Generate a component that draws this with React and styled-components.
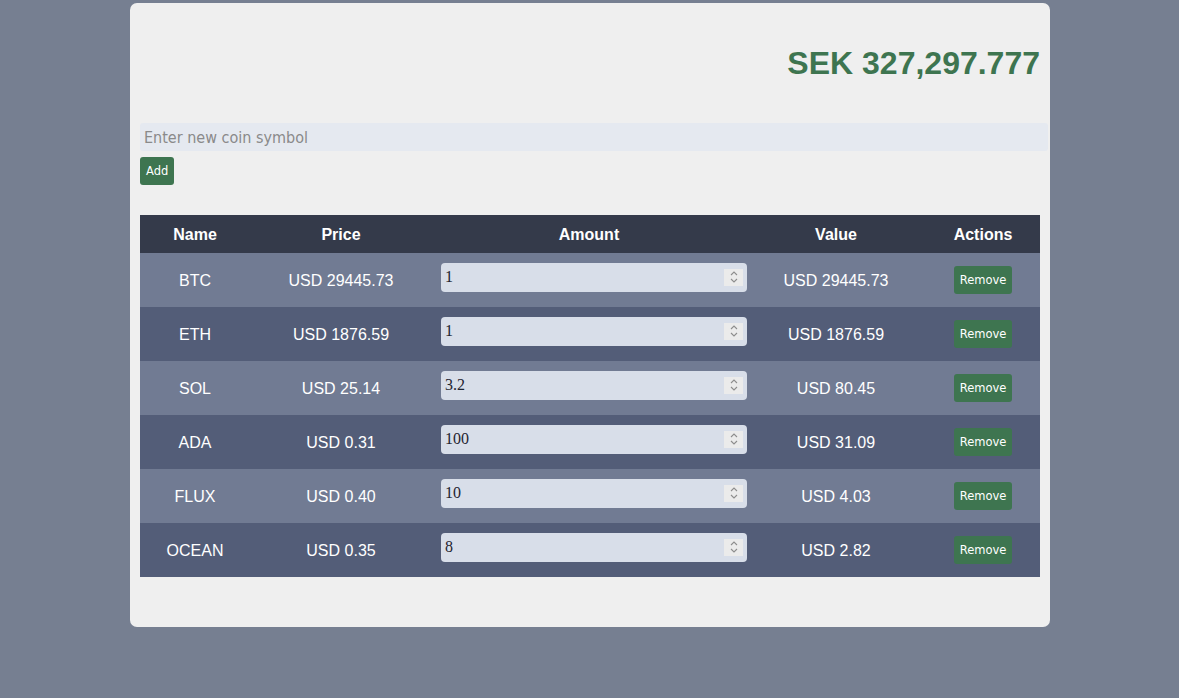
import React, { useState } from "react";
import styled, { createGlobalStyle } from "styled-components";

const GlobalStyle = createGlobalStyle`
    * { box-sizing: content-box; }
    body {
        margin: 0;
        background-color: #767f91;
        font-family: "Liberation Sans", Arial, sans-serif;
    }
`

const Page = styled.div`
    width: 100%;
    min-height: 698px;
    padding-top: 3px;
`

const Card = styled.div`
    width: 900px;
    margin-left: 130px;
    padding: 0 10px 50px 10px;
    background-color: #efefef;
    border-radius: 7px;
`

const Total = styled.h1`
    margin: 0;
    padding: 42px 0 0 0;
    height: 78px;
    text-align: right;
    font-size: 32px;
    font-weight: 700;
    color: #3e7550;
`

const CoinInput = styled.input`
    display: block;
    width: 100%;
    height: 28px;
    padding: 0 4px;
    border: none;
    outline: none;
    border-radius: 3px;
    background-color: #e5e9f0;
    font-family: "DejaVu Sans", Tahoma, sans-serif;
    font-stretch: condensed;
    font-size: 16px;
    color: #333;

    &::placeholder {
        color: #8a8a8a;
    }
`

const GreenButton = styled.button`
    height: 28px;
    padding: 0 ${(p) => p.$px}px;
    border: none;
    border-radius: 3px;
    background-color: #3e7550;
    color: white;
    font-family: "DejaVu Sans", Tahoma, sans-serif;
    font-size: 11.5px;
    cursor: pointer;
`

const AddRow = styled.div`
    margin-top: 6px;
    margin-bottom: 30px;
`

const Table = styled.table`
    width: 900px;
    border-collapse: collapse;
    table-layout: fixed;
    color: white;
    font-size: 16px;
`

const HeadRow = styled.tr`
    height: 38px;
    background-color: #343a4a;
`

const HeadCell = styled.th`
    padding: 1px 0 0 0;
    font-weight: 700;
    text-align: center;
`

const Row = styled.tr`
    height: 54px;
    background-color: ${(p) => (p.$odd ? "#535d78" : "#717b93")};
`

const Cell = styled.td`
    padding: ${(p) => (p.$flat ? "0" : "2px 0 0 0")};
    text-align: center;
`

const AmountCell = styled.td`
    padding: 0 0 0 9px;
    text-align: left;
`

const AmountBox = styled.div`
    position: relative;
    width: 306px;
    margin-bottom: 6px;
`

const AmountInput = styled.input`
    display: block;
    width: 298px;
    height: 29px;
    padding: 0 4px;
    border: none;
    outline: none;
    border-radius: 4px;
    background-color: #d8dee9;
    font-family: "Liberation Serif", "Times New Roman", serif;
    font-size: 16px;
    color: #1f2430;
    -moz-appearance: textfield;

    &::-webkit-inner-spin-button,
    &::-webkit-outer-spin-button {
        -webkit-appearance: none;
        margin: 0;
    }
`

const Spinner = styled.div`
    position: absolute;
    top: 6px;
    right: 4px;
    width: 19px;
    height: 17px;
    background-color: #ebebeb;
    display: flex;
    align-items: center;
    justify-content: center;
    pointer-events: none;
`

const coins = [
    { name: "BTC", price: "29445.73", amount: "1", value: "29445.73" },
    { name: "ETH", price: "1876.59", amount: "1", value: "1876.59" },
    { name: "SOL", price: "25.14", amount: "3.2", value: "80.45" },
    { name: "ADA", price: "0.31", amount: "100", value: "31.09" },
    { name: "FLUX", price: "0.40", amount: "10", value: "4.03" },
    { name: "OCEAN", price: "0.35", amount: "8", value: "2.82" },
];

function SpinIcon() {
    return (
        <svg width="10" height="14" viewBox="0 0 10 14" fill="none" stroke="#8d8d8d" strokeWidth="1.1">
            <path d="M2 5 L5 2 L8 5" />
            <path d="M2 9 L5 12 L8 9" />
        </svg>
    );
}

function App() {
    const [rows, setRows] = useState(coins);

    return (
        <Page>
            <GlobalStyle />
            <Card>
                <Total>SEK 327,297.777</Total>

                <CoinInput placeholder="Enter new coin symbol" />
                <AddRow>
                    <GreenButton $px={6}>Add</GreenButton>
                </AddRow>

                <Table>
                    <colgroup>
                        <col style={{ width: 110 }} />
                        <col style={{ width: 182 }} />
                        <col style={{ width: 314 }} />
                        <col style={{ width: 180 }} />
                        <col style={{ width: 114 }} />
                    </colgroup>
                    <thead>
                        <HeadRow>
                            <HeadCell>Name</HeadCell>
                            <HeadCell>Price</HeadCell>
                            <HeadCell>Amount</HeadCell>
                            <HeadCell>Value</HeadCell>
                            <HeadCell>Actions</HeadCell>
                        </HeadRow>
                    </thead>
                    <tbody>
                        {rows.map((c, i) => (
                            <Row key={c.name} $odd={i % 2 === 1}>
                                <Cell>{c.name}</Cell>
                                <Cell>USD {c.price}</Cell>
                                <AmountCell>
                                    <AmountBox>
                                        <AmountInput type="number" defaultValue={c.amount} />
                                        <Spinner>
                                            <SpinIcon />
                                        </Spinner>
                                    </AmountBox>
                                </AmountCell>
                                <Cell>USD {c.value}</Cell>
                                <Cell $flat>
                                    <GreenButton $px={6} onClick={() => setRows(rows.filter((r) => r.name !== c.name))}>
                                        Remove
                                    </GreenButton>
                                </Cell>
                            </Row>
                        ))}
                    </tbody>
                </Table>
            </Card>
        </Page>
    );
}

export default App;
